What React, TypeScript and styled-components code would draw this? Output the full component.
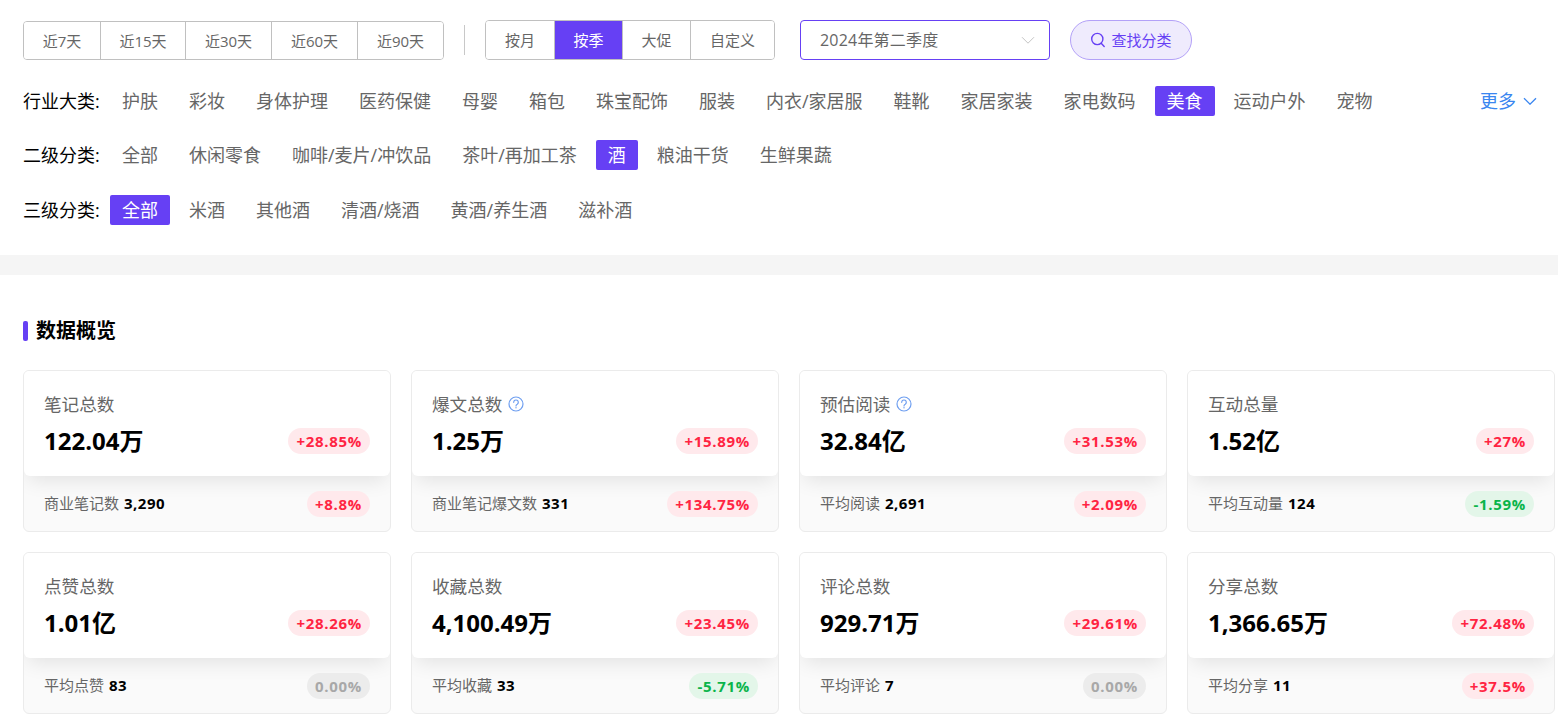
import React from "react";
import styled, { createGlobalStyle } from "styled-components";

const Global = createGlobalStyle`
  html, body { margin: 0; padding: 0; background: #fff; }
  body { font-family: "Open Sans", "Noto Sans CJK SC", sans-serif; width: 1558px; height: 722px; overflow: hidden; }
  * { box-sizing: border-box; }
`;

const Page = styled.div`
  width: 1558px;
`;
const Filters = styled.section`
  height: 255px;
  padding: 20px 3px 0 23px;
`;
const Toolbar = styled.div`
  display: flex;
  align-items: center;
  height: 40px;
  margin-bottom: 26px;
`;
const Segment = styled.div<{ $short?: boolean }>`
  display: flex;
  height: ${(p) => (p.$short ? "39px" : "40px")};
  margin-top: ${(p) => (p.$short ? "1px" : "0")};
  border: 1px solid #c0c0c0;
  border-radius: 4px;
  overflow: hidden;
`;
const SegButton = styled.div<{ $w: number; $active?: boolean }>`
  width: ${(p) => p.$w}px;
  display: flex;
  align-items: center;
  justify-content: center;
  font-size: 15px;
  line-height: 20px;
  color: ${(p) => (p.$active ? "#fff" : "#666")};
  background: ${(p) => (p.$active ? "#6640f4" : "#fff")};
  & + & { border-left: 1px solid #c0c0c0; }
`;
const Divider = styled.div`
  width: 1px;
  height: 30px;
  background: #c8c8c8;
  margin: 0 20px;
`;
const Select = styled.div`
  width: 250px;
  height: 40px;
  margin-left: 25px;
  padding: 0 14px 0 19px;
  border: 1px solid #6640f4;
  border-radius: 4px;
  display: flex;
  align-items: center;
  justify-content: space-between;
  font-size: 16px;
  line-height: 20px;
  letter-spacing: 0.2px;
  color: #666;
`;
const SearchButton = styled.div`
  width: 122px;
  height: 40px;
  margin-left: 20px;
  border: 1px solid #b3a1f8;
  border-radius: 20px;
  background: #efebfd;
  color: #6640f4;
  font-size: 15px;
  line-height: 20px;
  display: flex;
  align-items: center;
  justify-content: center;
  gap: 5px;
`;
const FilterRow = styled.div<{ $mb: number }>`
  display: flex;
  align-items: center;
  height: 30px;
  margin-bottom: ${(p) => p.$mb}px;
  font-size: 18px;
  line-height: 30px;
`;
const RowLabel = styled.div`
  width: 87px;
  flex: none;
  color: #000;
  white-space: nowrap;
`;
const Chips = styled.div`
  display: flex;
  flex: 1;
  gap: 7px;
`;
const Chip = styled.div<{ $active?: boolean }>`
  height: 30px;
  padding: 0 12px;
  border-radius: 2px;
  white-space: nowrap;
  color: ${(p) => (p.$active ? "#fff" : "#666")};
  background: ${(p) => (p.$active ? "#6640f4" : "transparent")};
`;
const More = styled.div`
  color: #3a86f0;
  display: flex;
  align-items: center;
  gap: 7px;
  white-space: nowrap;
  margin-right: 18px;
`;
const Band = styled.div`
  height: 20px;
  background: #f5f5f5;
`;
const Overview = styled.section`
  padding: 45px 3px 0 23px;
`;
const Title = styled.h2`
  margin: 0 0 29px;
  height: 21px;
  display: flex;
  align-items: center;
  gap: 8px;
  font-size: 20px;
  line-height: 21px;
  font-weight: 700;
  color: #000;
  &::before {
    content: "";
    width: 5px;
    height: 20px;
    border-radius: 2px;
    background: #6640f4;
  }
`;
const Grid = styled.div`
  display: grid;
  grid-template-columns: repeat(4, 368px);
  gap: 20px;
`;
const Card = styled.div`
  height: 162px;
  border: 1px solid #ebebeb;
  border-radius: 6px;
  background: #fafafa;
  overflow: hidden;
`;
const CardTop = styled.div`
  height: 105px;
  padding: 20px 20px 0;
  background: #fff;
  border-radius: 0 0 6px 6px;
  box-shadow: 0 8px 20px -4px rgba(0, 0, 0, 0.1);
`;
const CardName = styled.div`
  height: 26px;
  line-height: 26px;
  display: flex;
  align-items: center;
  gap: 5.5px;
  font-size: 17.6px;
  color: #666;
`;
const ValueRow = styled.div`
  display: flex;
  align-items: center;
  justify-content: space-between;
  margin-top: 9px;
`;
const Value = styled.div`
  font-size: 24px;
  line-height: 29px;
  font-weight: 700;
  color: #000;
`;
const Badge = styled.div<{ $tone: string }>`
  height: 26px;
  padding: 0 8px;
  border-radius: 13px;
  font-size: 15px;
  line-height: 26px;
  font-weight: 700;
  letter-spacing: 0.7px;
  white-space: nowrap;
  color: ${(p) => (p.$tone === "up" ? "#ff2442" : p.$tone === "down" ? "#0ab44a" : "#a8a8a8")};
  background: ${(p) => (p.$tone === "up" ? "#ffe9ec" : p.$tone === "down" ? "#e3f6e9" : "#ececec")};
`;
const CardBottom = styled.div`
  height: 55px;
  padding: 0 20px;
  display: flex;
  align-items: center;
  justify-content: space-between;
`;
const SubStat = styled.div`
  display: flex;
  align-items: center;
  gap: 5px;
  font-size: 15px;
  line-height: 20px;
  padding-bottom: 2px;
  color: #666;
`;
const SubValue = styled.span`
  font-weight: 700;
  letter-spacing: 0.5px;
  color: #000;
`;

const Help = () => (
  <svg width="16" height="16" viewBox="0 0 16 16" fill="none" stroke="#6f9ff0" strokeWidth="1.2">
    <circle cx="8" cy="8" r="7" />
    <path d="M5.7 6.3a2.3 2.3 0 1 1 3.5 2c-.8.4-1.2.8-1.2 1.6" strokeLinecap="round" />
    <circle cx="8" cy="11.8" r=".7" fill="#6f9ff0" stroke="none" />
  </svg>
);
const Chevron = ({ color, w, sw }: { color: string; w: number; sw: number }) => (
  <svg width={w} height={w * 0.6} viewBox="0 0 14 8" fill="none" stroke={color} strokeWidth={sw}>
    <path d="M1 1l6 6 6-6" />
  </svg>
);
const SearchIcon = () => (
  <svg width="16" height="16" viewBox="0 0 16 16" fill="none" stroke="#6640f4" strokeWidth="1.4">
    <circle cx="7.3" cy="7" r="5.6" />
    <path d="M11.2 11.2l3 3.3" strokeLinecap="round" />
  </svg>
);

const days = [["近7天", 76], ["近15天", 85], ["近30天", 86], ["近60天", 86], ["近90天", 86]] as const;
const modes = [["按月", 68], ["按季", 68], ["大促", 68], ["自定义", 84]] as const;
const rows = [
  { label: "行业大类:", mb: 24, items: ["护肤", "彩妆", "身体护理", "医药保健", "母婴", "箱包", "珠宝配饰", "服装", "内衣/家居服", "鞋靴", "家居家装", "家电数码", "美食", "运动户外", "宠物"], active: "美食", more: true },
  { label: "二级分类:", mb: 25, items: ["全部", "休闲零食", "咖啡/麦片/冲饮品", "茶叶/再加工茶", "酒", "粮油干货", "生鲜果蔬"], active: "酒" },
  { label: "三级分类:", mb: 0, items: ["全部", "米酒", "其他酒", "清酒/烧酒", "黄酒/养生酒", "滋补酒"], active: "全部" },
];
type Stat = { name: string; help?: boolean; value: string; change: string; tone: string; sub: string; subValue: string; subChange: string; subTone: string };
const stats: Stat[] = [
  { name: "笔记总数", value: "122.04万", change: "+28.85%", tone: "up", sub: "商业笔记数", subValue: "3,290", subChange: "+8.8%", subTone: "up" },
  { name: "爆文总数", help: true, value: "1.25万", change: "+15.89%", tone: "up", sub: "商业笔记爆文数", subValue: "331", subChange: "+134.75%", subTone: "up" },
  { name: "预估阅读", help: true, value: "32.84亿", change: "+31.53%", tone: "up", sub: "平均阅读", subValue: "2,691", subChange: "+2.09%", subTone: "up" },
  { name: "互动总量", value: "1.52亿", change: "+27%", tone: "up", sub: "平均互动量", subValue: "124", subChange: "-1.59%", subTone: "down" },
  { name: "点赞总数", value: "1.01亿", change: "+28.26%", tone: "up", sub: "平均点赞", subValue: "83", subChange: "0.00%", subTone: "zero" },
  { name: "收藏总数", value: "4,100.49万", change: "+23.45%", tone: "up", sub: "平均收藏", subValue: "33", subChange: "-5.71%", subTone: "down" },
  { name: "评论总数", value: "929.71万", change: "+29.61%", tone: "up", sub: "平均评论", subValue: "7", subChange: "0.00%", subTone: "zero" },
  { name: "分享总数", value: "1,366.65万", change: "+72.48%", tone: "up", sub: "平均分享", subValue: "11", subChange: "+37.5%", subTone: "up" },
];

export default function App() {
  return (
    <Page>
      <Global />
      <Filters>
        <Toolbar>
          <Segment $short>
            {days.map(([t, w]) => <SegButton key={t} $w={w}>{t}</SegButton>)}
          </Segment>
          <Divider />
          <Segment>
            {modes.map(([t, w]) => <SegButton key={t} $w={w} $active={t === "按季"}>{t}</SegButton>)}
          </Segment>
          <Select>
            2024年第二季度
            <Chevron color="#c4c4c4" w={14} sw={1} />
          </Select>
          <SearchButton><SearchIcon />查找分类</SearchButton>
        </Toolbar>
        {rows.map((r) => (
          <FilterRow key={r.label} $mb={r.mb}>
            <RowLabel>{r.label}</RowLabel>
            <Chips>
              {r.items.map((i) => <Chip key={i} $active={i === r.active}>{i}</Chip>)}
            </Chips>
            {r.more && <More>更多<Chevron color="#3a86f0" w={14} sw={1.3} /></More>}
          </FilterRow>
        ))}
      </Filters>
      <Band />
      <Overview>
        <Title>数据概览</Title>
        <Grid>
          {stats.map((s) => (
            <Card key={s.name}>
              <CardTop>
                <CardName>{s.name}{s.help && <Help />}</CardName>
                <ValueRow>
                  <Value>{s.value}</Value>
                  <Badge $tone={s.tone}>{s.change}</Badge>
                </ValueRow>
              </CardTop>
              <CardBottom>
                <SubStat>{s.sub}<SubValue>{s.subValue}</SubValue></SubStat>
                <Badge $tone={s.subTone}>{s.subChange}</Badge>
              </CardBottom>
            </Card>
          ))}
        </Grid>
      </Overview>
    </Page>
  );
}
